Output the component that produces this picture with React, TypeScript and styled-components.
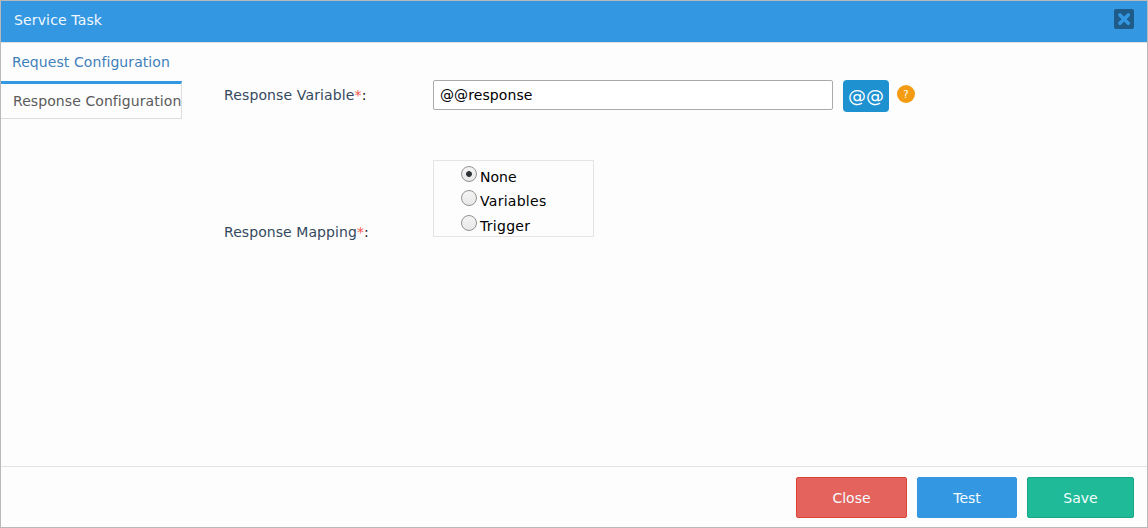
import React, { useState } from 'react';
import styled, { createGlobalStyle } from 'styled-components';

const GlobalStyle = createGlobalStyle`
  *, *::before, *::after { box-sizing: border-box; }
  body { margin: 0; background: #fdfdfd; }
  body, button, input { font-family: "DejaVu Sans", sans-serif; font-size: 14px; }
`;

const Dialog = styled.div`
  display: flex;
  flex-direction: column;
  width: 1148px;
  height: 528px;
  border: 1px solid #b9b9b9;
  background: #fdfdfd;
  overflow: hidden;
`;

const TitleBar = styled.header`
  display: flex;
  flex: none;
  align-items: flex-start;
  justify-content: space-between;
  height: 42px;
  padding: 8px 13px 0 13px;
  border-bottom: 1px solid #e0e0e0;
  background: #3397e1;
  color: #f1f8fd;
`;

const Title = styled.div`
  line-height: 22px;
  letter-spacing: 0.14px;
`;

const CloseIcon = styled.button`
  display: flex;
  width: 20px;
  height: 20px;
  padding: 0;
  border: 0;
  border-radius: 2px;
  background: #1f5b88;
`;

const Body = styled.main`
  display: flex;
  flex: 1;
`;

const Tabs = styled.nav`
  display: flex;
  flex: none;
  flex-direction: column;
  width: 181px;
`;

const Tab = styled.div<{ $active?: boolean }>`
  height: 38px;
  line-height: ${p => (p.$active ? '34px' : '38px')};
  white-space: nowrap;
  letter-spacing: 0.08px;
  color: ${p => (p.$active ? '#5a5a5a' : '#3f80bb')};
  padding-left: ${p => (p.$active ? 12 : 11)}px;
  ${p => p.$active && `
    border-top: 3px solid #3397e1;
    border-right: 1px solid #ddd;
    border-bottom: 1px solid #ddd;
  `}
`;

const Form = styled.div`
  display: flex;
  flex-direction: column;
  gap: 48px;
  padding: 37px 0 0 42px;
`;

const Row = styled.div<{ $end?: boolean }>`
  display: flex;
  align-items: ${p => (p.$end ? 'flex-end' : 'flex-start')};
`;

const Label = styled.label<{ $low?: boolean }>`
  width: 209px;
  line-height: ${p => (p.$low ? 10 : 30)}px;
  letter-spacing: ${p => (p.$low ? 0.07 : 0.13)}px;
  color: #34495e;
`;

const Required = styled.span`
  color: #f8554b;
`;

const Colon = styled.span`
  color: #111;
`;

const TextField = styled.input`
  width: 400px;
  height: 30px;
  padding: 0 6px;
  border: 1px solid #aaa;
  border-radius: 2px;
  outline: 0;
  background: #fff;
  color: #000;
  letter-spacing: 0.1px;
`;

const VariableButton = styled.button`
  width: 46px;
  height: 32px;
  margin-left: 10px;
  padding: 0;
  border: 0;
  border-radius: 4px;
  background: #1e91d1;
  color: #fff;
  font-size: 18px;
  line-height: 30px;
`;

const Help = styled.span`
  width: 18px;
  height: 18px;
  margin: 5px 0 0 8px;
  border-radius: 50%;
  background: #f39c12;
  color: #fff;
  font-size: 10px;
  line-height: 19px;
  text-align: center;
`;

const Options = styled.div`
  display: flex;
  flex-direction: column;
  width: 161px;
  height: 77px;
  padding: 5px 0 0 27px;
  border: 1px solid #e4e4e4;
`;

const Option = styled.label<{ $height: number; $spacing: number }>`
  display: flex;
  flex: none;
  gap: 3px;
  height: ${p => p.$height}px;
  line-height: 22px;
  letter-spacing: ${p => p.$spacing}px;
  color: #000;
`;

const Radio = styled.input`
  appearance: none;
  flex: none;
  width: 16px;
  height: 16px;
  margin: 0;
  border: 1px solid #92928f;
  border-radius: 50%;
  background: linear-gradient(#f4f4f4, #e8e8e8);
  &:checked {
    background: radial-gradient(circle, #2e3436 0 2.5px, transparent 3.3px), linear-gradient(#f4f4f4, #e8e8e8);
  }
`;

const Footer = styled.footer`
  display: flex;
  flex: none;
  justify-content: flex-end;
  gap: 10px;
  height: 61px;
  padding: 10px 13px 0;
  border-top: 1px solid #e2e2e2;
`;

const Action = styled.button<{ $width: number; $fill: string; $edge: string }>`
  width: ${p => p.$width}px;
  height: 41px;
  padding: 0;
  border: 1px solid ${p => p.$edge};
  border-radius: 2px;
  background: ${p => p.$fill};
  color: #f4fbfd;
`;

const mappings = [
  { name: 'None', height: 24, spacing: 0 },
  { name: 'Variables', height: 25, spacing: 0.28 },
  { name: 'Trigger', height: 22, spacing: 0.28 },
];

export default function App() {
  const [mapping, setMapping] = useState('None');
  return (
    <>
      <GlobalStyle />
      <Dialog>
        <TitleBar>
          <Title>Service Task</Title>
          <CloseIcon aria-label="Close dialog">
            <svg width="20" height="20" viewBox="0 0 20 20">
              <path d="M5.9 5.9l8.4 8.4M14.3 5.9l-8.4 8.4" stroke="#3397e1" strokeWidth="3.5" strokeLinecap="round" />
            </svg>
          </CloseIcon>
        </TitleBar>
        <Body>
          <Tabs>
            <Tab>Request Configuration</Tab>
            <Tab $active>Response Configuration</Tab>
          </Tabs>
          <Form>
            <Row>
              <Label>Response Variable<Required>*</Required><Colon>:</Colon></Label>
              <TextField defaultValue="@@response" />
              <VariableButton>@@</VariableButton>
              <Help>?</Help>
            </Row>
            <Row $end>
              <Label as="span" $low>
                Response Mapping<Required>*</Required><Colon>:</Colon>
              </Label>
              <Options>
                {mappings.map(({ name, height, spacing }) => (
                  <Option key={name} $height={height} $spacing={spacing}>
                    <Radio type="radio" name="mapping" checked={mapping === name} onChange={() => setMapping(name)} />
                    {name}
                  </Option>
                ))}
              </Options>
            </Row>
          </Form>
        </Body>
        <Footer>
          <Action $width={111} $fill="#e4645d" $edge="#dc4437">Close</Action>
          <Action $width={100} $fill="#3397e1" $edge="#3397e1">Test</Action>
          <Action $width={107} $fill="#1fbb99" $edge="#18a584">Save</Action>
        </Footer>
      </Dialog>
    </>
  );
}
